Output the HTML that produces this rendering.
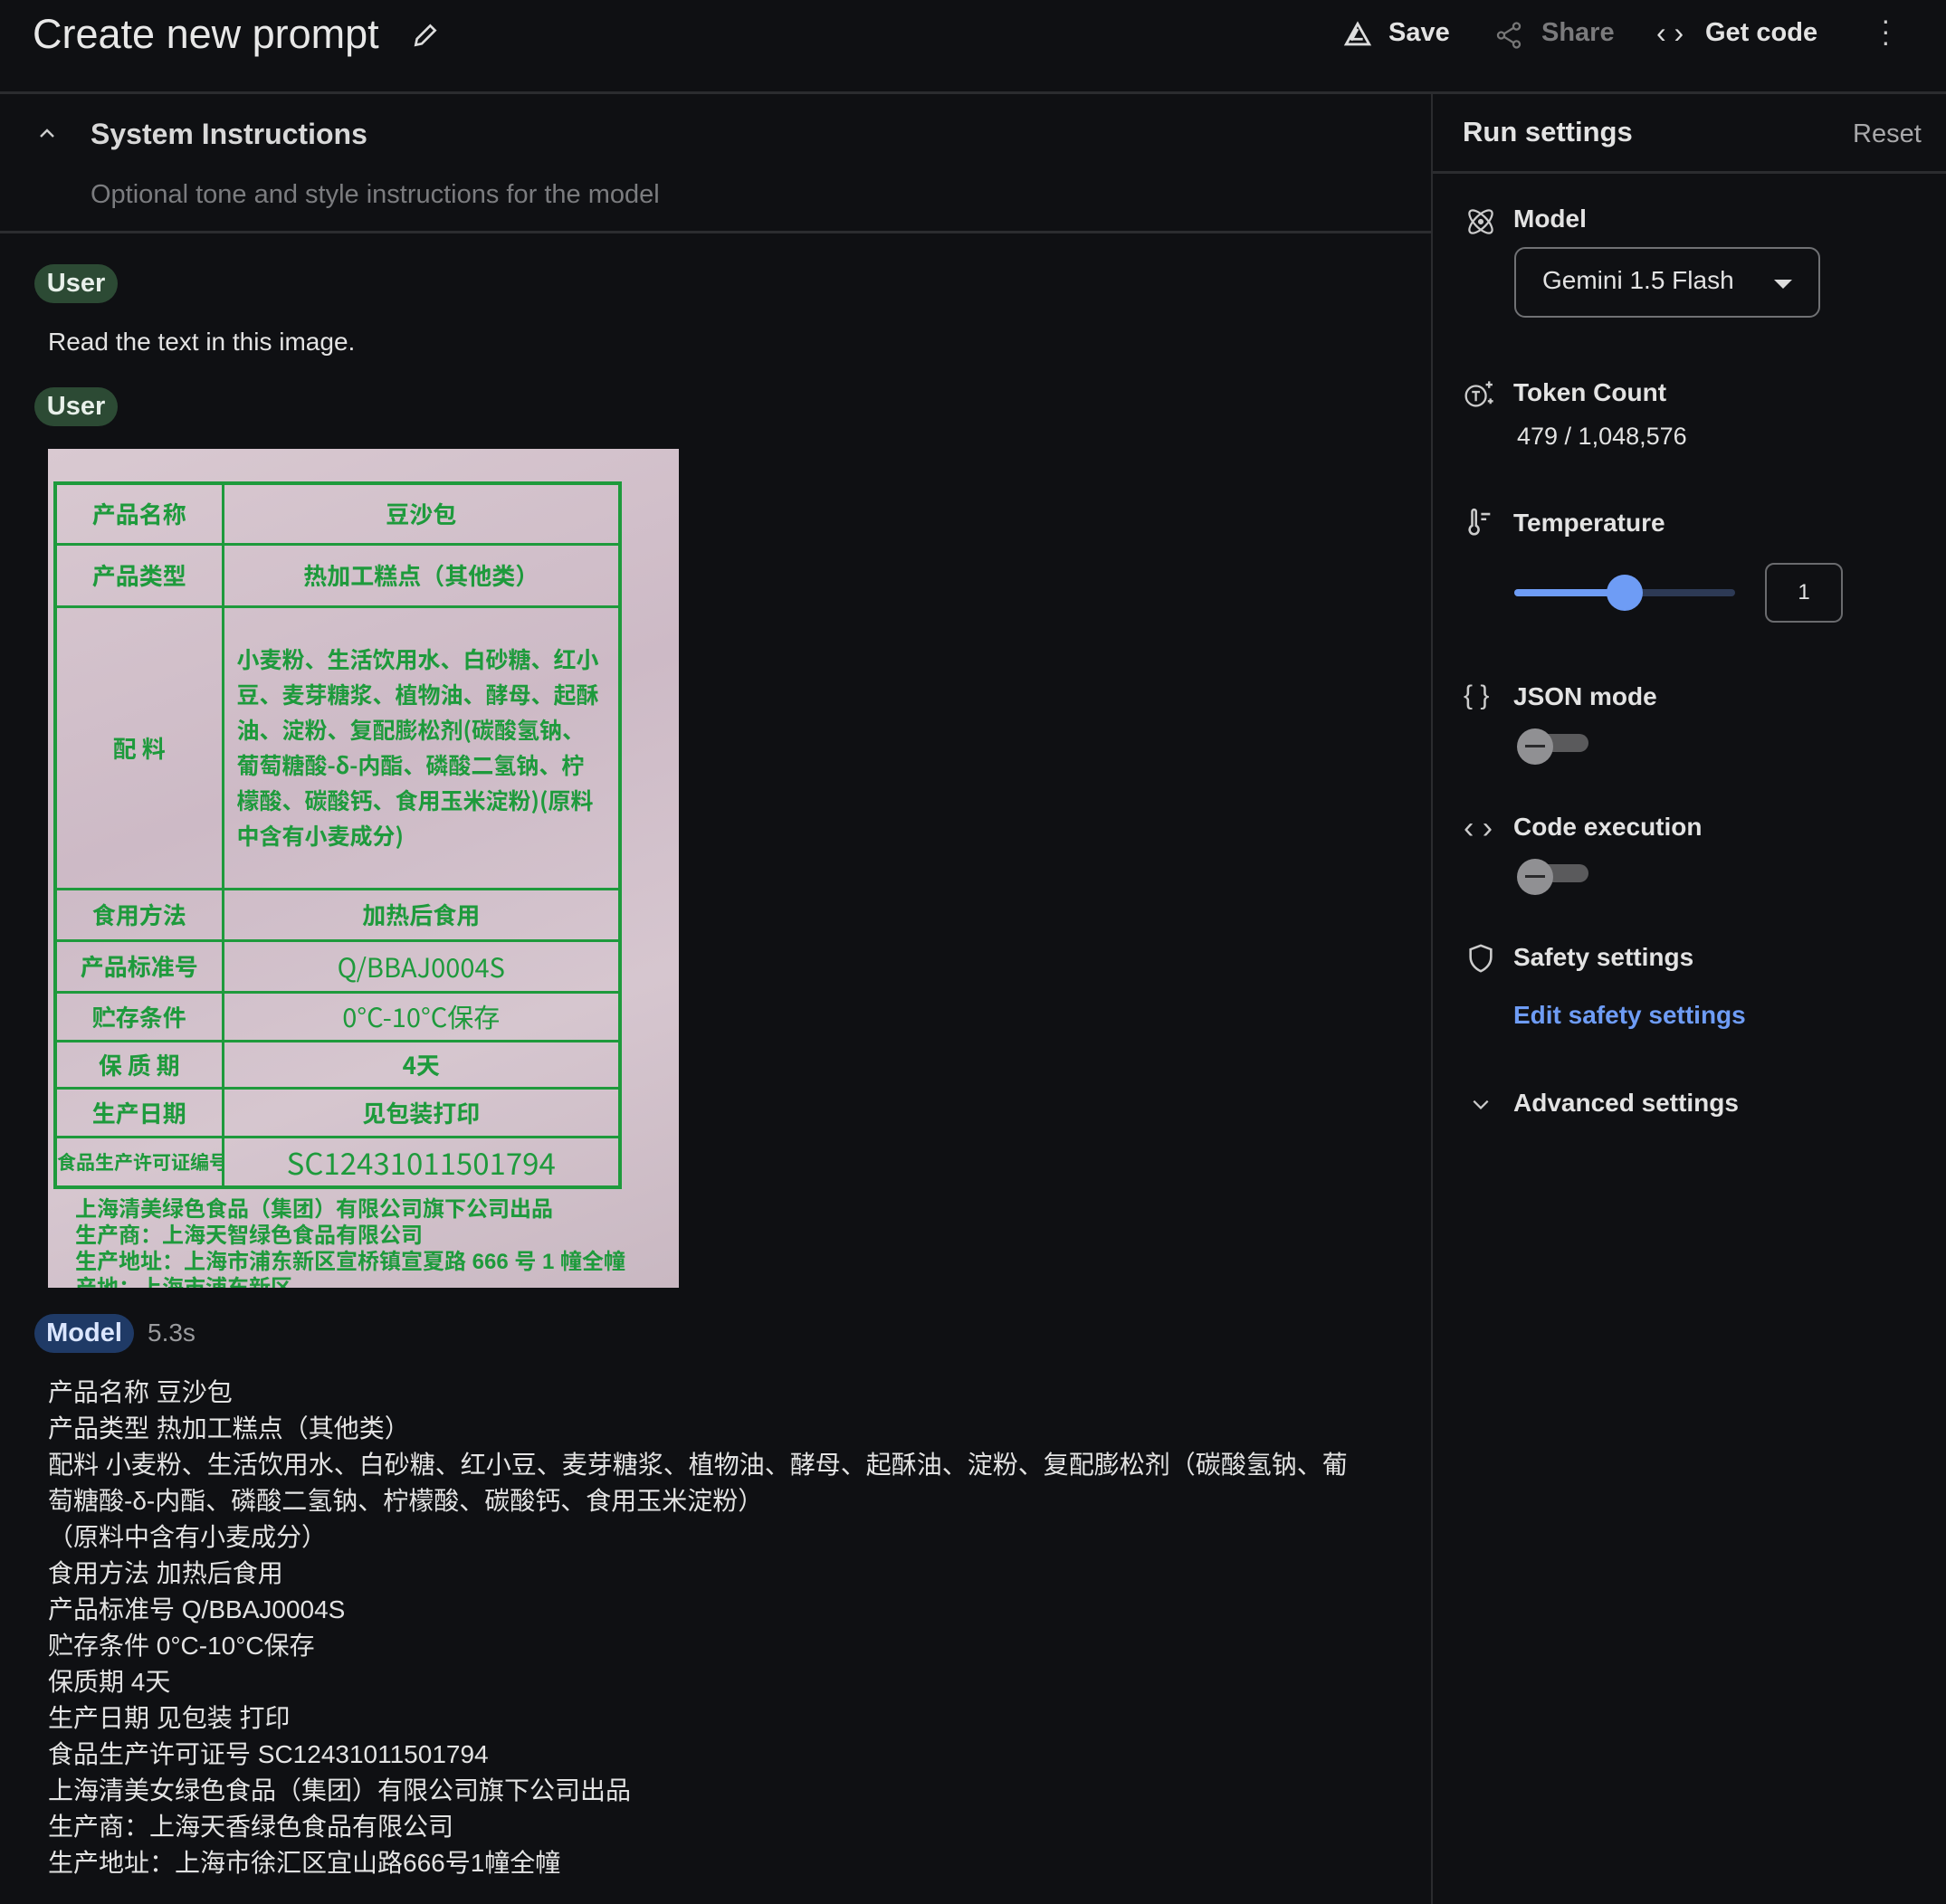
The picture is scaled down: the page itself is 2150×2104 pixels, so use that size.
<!DOCTYPE html>
<html><head><meta charset="utf-8">
<style>
*{box-sizing:border-box;margin:0;padding:0}
body{width:2150px;height:2102px;background:#0f1013;color:#e3e3e3;font-family:"Liberation Sans","Noto Sans CJK SC",sans-serif;position:relative;overflow:hidden}
.a{position:absolute;white-space:nowrap}
.chip{position:absolute;border-radius:22px;font-weight:bold;font-size:29px;display:flex;align-items:center;justify-content:center}
.lbl{font-size:28px;font-weight:bold;color:#e3e3e3}
.img{position:absolute;left:53px;top:496px;width:697px;height:927px;background:linear-gradient(160deg,#d9c9d1 0%,#cdbac6 40%,#d6c6cf 70%,#c9b8c2 100%);overflow:hidden}
.img table{position:absolute;left:6px;top:36px;width:628px;border-collapse:collapse;border:4px solid #1e9a3c;table-layout:fixed}
.img td{border:3px solid #1e9a3c;color:#1e9a3c;font-weight:bold;font-size:26px;text-align:center;font-family:"Noto Sans CJK SC",sans-serif;overflow:hidden;white-space:nowrap;padding:0}
.img td.l{width:185px}
.resp div{height:40px;line-height:40px}
.tog{position:absolute;width:79px;height:30px}
.tog .tr{position:absolute;left:10px;top:5px;width:69px;height:20px;border-radius:10px;background:#5a5a5c}
.tog .th{position:absolute;left:0;top:-1px;width:40px;height:40px;border-radius:50%;background:#909093}
.tog .th:after{content:"";position:absolute;left:9px;top:18px;width:22px;height:3px;background:#2a2a2c}
</style></head><body>
<div class="a" style="left:36px;top:12px;font-size:45px;color:#e8e8e8">Create new prompt</div>
<svg class="a" style="left:454px;top:22px" width="32" height="34" viewBox="0 0 24 24" fill="none" stroke="#ddd" stroke-width="2"><path d="M4 20l1-5L16 4l4 4L9 19z"/></svg>
<svg class="a" style="left:1482px;top:22px" width="36" height="34" viewBox="0 0 24 24" fill="none" stroke="#ddd" stroke-width="2"><path d="M12 3L3 19h18z M8 15h8 M12 7l-5 9"/></svg>
<div class="a" style="left:1534px;top:20px;font-size:29px;font-weight:bold">Save</div>
<svg class="a" style="left:1650px;top:22px" width="34" height="34" viewBox="0 0 24 24" fill="none" stroke="#777" stroke-width="1.6"><circle cx="18" cy="5" r="2.5"/><circle cx="6" cy="12" r="2.5"/><circle cx="18" cy="19" r="2.5"/><path d="M8 11l8-5M8 13l8 5"/></svg>
<div class="a" style="left:1703px;top:20px;font-size:29px;font-weight:bold;color:#7a7a7c">Share</div>
<div class="a" style="left:1830px;top:18px;font-size:32px;color:#ddd">‹ ›</div>
<div class="a" style="left:1884px;top:20px;font-size:29px;font-weight:bold">Get code</div>
<div class="a" style="left:2078px;top:16px;font-size:32px;line-height:12px;color:#ccc">·<br>·<br>·</div>
<div class="a" style="left:0;top:101px;width:2150px;height:3px;background:#2b2c2f"></div>
<div class="a" style="left:1581px;top:104px;width:2px;height:2000px;background:#2b2c2f"></div>
<svg class="a" style="left:42px;top:139px" width="20" height="16" viewBox="0 0 20 16" fill="none" stroke="#ccc" stroke-width="2.4"><path d="M3 12l7-7 7 7"/></svg>
<div class="a" style="left:100px;top:130px;font-size:32px;font-weight:bold;color:#d8d8d8">System Instructions</div>
<div class="a" style="left:100px;top:199px;font-size:29px;color:#7b7c7f">Optional tone and style instructions for the model</div>
<div class="a" style="left:0;top:255px;width:1581px;height:3px;background:#2b2c2f"></div>
<div class="chip" style="left:38px;top:292px;width:92px;height:43px;background:#2c4a34;color:#e8f0ea">User</div>
<div class="a" style="left:53px;top:362px;font-size:28px">Read the text in this image.</div>
<div class="chip" style="left:38px;top:428px;width:92px;height:43px;background:#2c4a34;color:#e8f0ea">User</div>
<div class="img">
<table>
<tr style="height:67px"><td class="l">产品名称</td><td>豆沙包</td></tr>
<tr style="height:69px"><td class="l">产品类型</td><td>热加工糕点（其他类）</td></tr>
<tr style="height:312px"><td class="l">配 料</td><td style="text-align:left;padding:0 14px;font-size:25px;line-height:39px;white-space:normal">小麦粉、生活饮用水、白砂糖、红小豆、麦芽糖浆、植物油、酵母、起酥油、淀粉、复配膨松剂(碳酸氢钠、葡萄糖酸-δ-内酯、磷酸二氢钠、柠檬酸、碳酸钙、食用玉米淀粉)(原料中含有小麦成分)</td></tr>
<tr style="height:57px"><td class="l">食用方法</td><td>加热后食用</td></tr>
<tr style="height:57px"><td class="l">产品标准号</td><td style="font-weight:normal;font-size:29px">Q/BBAJ0004S</td></tr>
<tr style="height:54px"><td class="l">贮存条件</td><td style="font-weight:normal;font-size:29px">0°C-10°C保存</td></tr>
<tr style="height:52px"><td class="l">保 质 期</td><td>4天</td></tr>
<tr style="height:54px"><td class="l">生产日期</td><td>见包装打印</td></tr>
<tr style="height:56px"><td class="l" style="font-size:21px">食品生产许可证编号</td><td style="font-weight:normal;font-size:33px">SC12431011501794</td></tr>
</table>
<div class="a" style="left:30px;top:826px;font-size:24px;line-height:29px;color:#1e9a3c;font-weight:bold">上海清美绿色食品（集团）有限公司旗下公司出品<br>生产商：上海天智绿色食品有限公司<br>生产地址：上海市浦东新区宣桥镇宣夏路 666 号 1 幢全幢<br>产地：上海市浦东新区</div>
</div>
<div class="chip" style="left:38px;top:1452px;width:110px;height:43px;background:#1f3a66;color:#dbe6ff">Model</div>
<div class="a" style="left:163px;top:1457px;font-size:28px;color:#9a9b9e">5.3s</div>
<div class="a resp" style="left:53px;top:1519px;font-size:28px;color:#e3e3e3">
<div>产品名称 豆沙包</div>
<div>产品类型 热加工糕点（其他类）</div>
<div>配料 小麦粉、生活饮用水、白砂糖、红小豆、麦芽糖浆、植物油、酵母、起酥油、淀粉、复配膨松剂（碳酸氢钠、葡</div>
<div>萄糖酸-δ-内酯、磷酸二氢钠、柠檬酸、碳酸钙、食用玉米淀粉）</div>
<div>（原料中含有小麦成分）</div>
<div>食用方法 加热后食用</div>
<div>产品标准号 Q/BBAJ0004S</div>
<div>贮存条件 0°C-10°C保存</div>
<div>保质期 4天</div>
<div>生产日期 见包装 打印</div>
<div>食品生产许可证号 SC12431011501794</div>
<div>上海清美女绿色食品（集团）有限公司旗下公司出品</div>
<div>生产商：上海天香绿色食品有限公司</div>
<div>生产地址：上海市徐汇区宜山路666号1幢全幢</div>
</div>
<div class="a" style="left:1616px;top:128px;font-size:31px;font-weight:bold;color:#e3e3e3">Run settings</div>
<div class="a" style="left:2047px;top:132px;font-size:29px;color:#a8a8aa">Reset</div>
<div class="a" style="left:1583px;top:189px;width:567px;height:3px;background:#2b2c2f"></div>
<svg class="a" style="left:1618px;top:227px" width="36" height="36" viewBox="0 0 24 24" fill="none" stroke="#ccc" stroke-width="1.5"><ellipse cx="12" cy="12" rx="11" ry="4.5" transform="rotate(45 12 12)"/><ellipse cx="12" cy="12" rx="11" ry="4.5" transform="rotate(-45 12 12)"/><circle cx="12" cy="12" r="1.3" fill="#ccc"/></svg>
<div class="a lbl" style="left:1672px;top:226px">Model</div>
<div class="a" style="left:1673px;top:273px;width:338px;height:78px;border:2px solid #707174;border-radius:12px"></div>
<div class="a" style="left:1704px;top:294px;font-size:28px;color:#e3e3e3">Gemini 1.5 Flash</div>
<div class="a" style="left:1960px;top:309px;width:0;height:0;border-left:10px solid transparent;border-right:10px solid transparent;border-top:10px solid #ddd"></div>
<svg class="a" style="left:1616px;top:418px" width="38" height="36" viewBox="0 0 26 24" fill="none" stroke="#ccc" stroke-width="1.6"><circle cx="10" cy="13" r="7.5"/><path d="M7 10h6M10 10v7"/><path d="M20 2v5M17.5 4.5h5M21 15v4M19 17h4"/></svg>
<div class="a lbl" style="left:1672px;top:418px">Token Count</div>
<div class="a" style="left:1676px;top:467px;font-size:27px;color:#e3e3e3">479 / 1,048,576</div>
<svg class="a" style="left:1618px;top:561px" width="34" height="34" viewBox="0 0 24 24" fill="none" stroke="#ccc" stroke-width="1.8"><path d="M6 3v11a3.5 3.5 0 1 0 3 0V3a1.5 1.5 0 0 0-3 0z"/><path d="M13 5h7M13 9h4"/></svg>
<div class="a lbl" style="left:1672px;top:562px">Temperature</div>
<div class="a" style="left:1673px;top:651px;width:244px;height:8px;border-radius:4px;background:#2d3a55"></div>
<div class="a" style="left:1673px;top:651px;width:122px;height:8px;border-radius:4px;background:#6e9cf5"></div>
<div class="a" style="left:1775px;top:635px;width:40px;height:40px;border-radius:50%;background:#6e9cf5"></div>
<div class="a" style="left:1950px;top:622px;width:86px;height:66px;border:2px solid #6a6b6e;border-radius:10px;text-align:center;line-height:62px;font-size:24px">1</div>
<div class="a" style="left:1617px;top:752px;font-size:30px;color:#ccc">{ }</div>
<div class="a lbl" style="left:1672px;top:754px">JSON mode</div>
<div class="tog" style="left:1676px;top:806px"><div class="tr"></div><div class="th"></div></div>
<div class="a" style="left:1617px;top:896px;font-size:34px;color:#ccc">‹ ›</div>
<div class="a lbl" style="left:1672px;top:898px">Code execution</div>
<div class="tog" style="left:1676px;top:950px"><div class="tr"></div><div class="th"></div></div>
<svg class="a" style="left:1619px;top:1042px" width="34" height="34" viewBox="0 0 24 24" fill="none" stroke="#ccc" stroke-width="1.8"><path d="M12 2l8 3v6c0 5-3.5 9-8 11-4.5-2-8-6-8-11V5z"/></svg>
<div class="a lbl" style="left:1672px;top:1042px">Safety settings</div>
<div class="a" style="left:1672px;top:1106px;font-size:28px;font-weight:bold;color:#6e9cf5">Edit safety settings</div>
<svg class="a" style="left:1625px;top:1212px" width="22" height="16" viewBox="0 0 20 14" fill="none" stroke="#ccc" stroke-width="2"><path d="M3 4l7 7 7-7"/></svg>
<div class="a lbl" style="left:1672px;top:1203px">Advanced settings</div>
</body></html>
